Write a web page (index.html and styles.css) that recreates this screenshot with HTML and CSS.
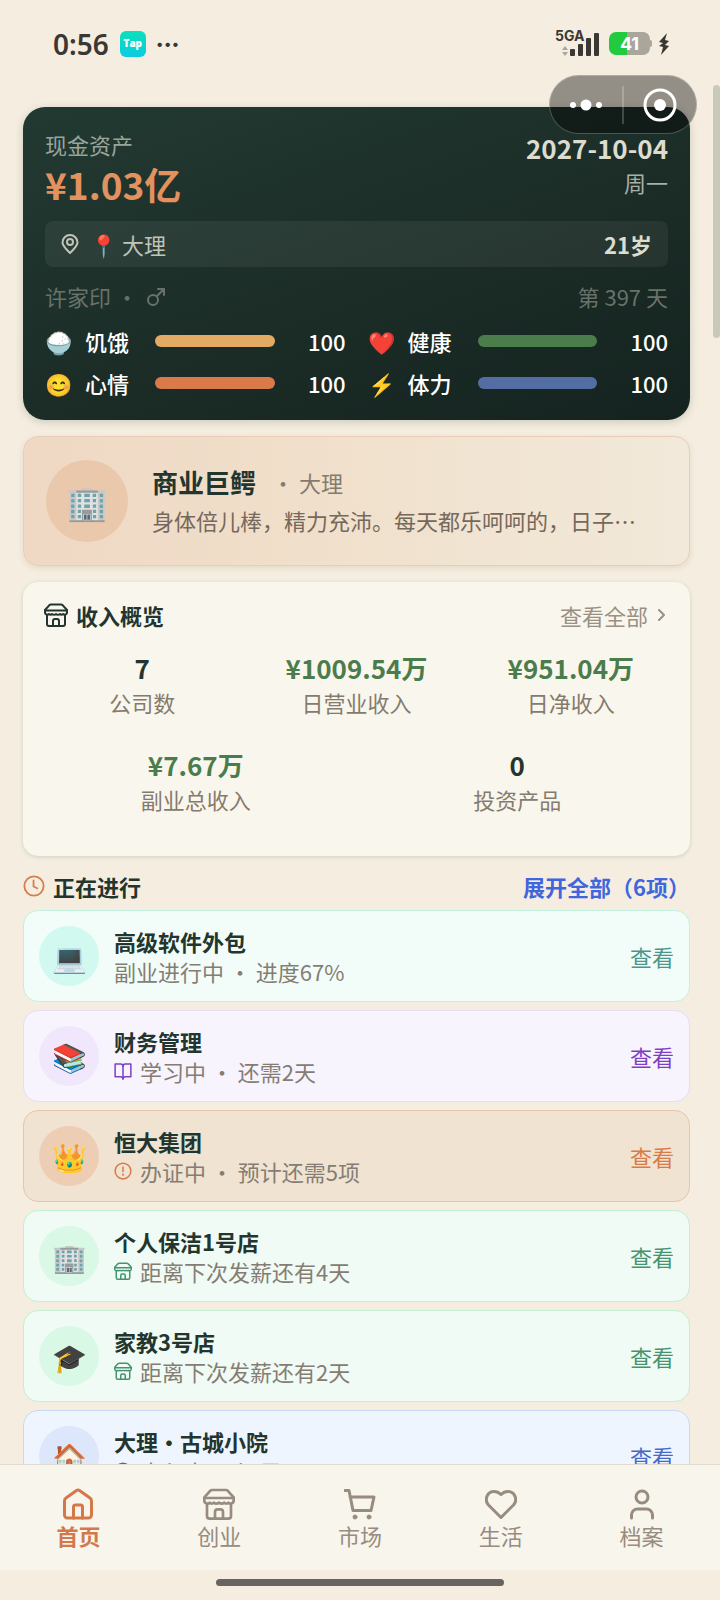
FILE: index.html
```html
<!DOCTYPE html>
<html lang="zh-CN">
<head>
  <meta charset="UTF-8" />
  <meta name="viewport" content="width=device-width, initial-scale=1" />
  <title>首页</title>
  <link rel="stylesheet" href="styles.css">
</head>
<body>

  <!-- shared icons -->
  <svg class="sprite" aria-hidden="true">
    <symbol id="i-store" viewBox="0 0 24 24">
      <path d="M7 1.500h10q1 0 1.800.8L23 7v2.500a2 2 0 0 1-1.500 2q-1.500.7-2.500-.5-1.500 1.500-3 0-2 1.500-4 0-2 1.500-4 0-1.500 1.500-3 0-1 1.200-2.500.5A2 2 0 0 1 1 9.500V7l4.200-4.700Q6 1.500 7 1.500z" />
      <path d="M1 7.500h22" />
      <path d="M3 12v9a2 2 0 0 0 2 2h14a2 2 0 0 0 2-2v-9" />
      <path d="M9 23v-5a2 2 0 0 1 2-2h2a2 2 0 0 1 2 2v5" />
    </symbol>
    <symbol id="i-clock" viewBox="0 0 24 24">
      <circle cx="12" cy="12" r="10.500" />
      <path d="M11.500 6v6.500l4 2" />
    </symbol>
    <symbol id="i-book" viewBox="0 0 24 24">
      <path d="M12 5.500C12 3.500 10.500 2.500 9 2.500H1.500v17H9c2 0 3 1 3 3 0-2 1-3 3-3h7.500v-17H15c-1.500 0-3 1-3 3z" />
      <path d="M12 5.500v17" />
    </symbol>
    <symbol id="i-alert" viewBox="0 0 24 24">
      <circle cx="12" cy="12" r="10.500" />
      <path d="M12 6.500v6M12 16v1.500" />
    </symbol>
  </svg>

  <header class="status-bar">
    <span class="time">0:56</span>
    <span class="tap-logo">Tap</span>
    <span class="more">•••</span>
    <div class="status-right">
      <div class="signal">
        <span>5GA</span>
        <svg viewBox="0 0 46 26" width="46" height="26">
          <path class="dim" d="M7 19l3 -4 3 4zM7 21l3 4 3-4z" />
          <rect x="15" y="18" width="5" height="7" rx="1" />
          <rect x="23" y="13" width="5" height="12" rx="1" />
          <rect x="31" y="7" width="5" height="18" rx="1" />
          <rect x="39" y="2" width="5" height="23" rx="1" />
        </svg>
      </div>
      <div class="battery"><span>41</span></div>
      <svg class="bolt" viewBox="0 0 12 22" width="12" height="22">
        <path d="M9 0L1 9l4 1-4 3 4 1-2 8 8-9-4-1 4-4-4-1z" />
      </svg>
    </div>
  </header>

  <main class="page">

    <section class="hero">
      <div class="hero-top">
        <div>
          <div class="hero-label">现金资产</div>
          <div class="cash">¥1.03亿</div>
        </div>
        <div class="hero-date">
          <div class="date">2027-10-04</div>
          <div class="weekday">周一</div>
        </div>
      </div>
      <div class="place">
        <svg viewBox="0 0 18 20" width="18" height="20">
          <path d="M9 19C6 16 1.500 12 1.500 8.500a7.500 7.500 0 0 1 15 0C16.500 12 12 16 9 19z" />
          <circle cx="9" cy="8" r="3" />
        </svg>
        <span class="place-name">📍 大理</span>
        <span class="age">21岁</span>
      </div>
      <div class="person">
        <span class="person-name">许家印 ・
          <svg viewBox="0 0 20 20" width="20" height="20">
            <circle cx="7" cy="14" r="5" />
            <path d="M11 10l7-7M12 3h6v6" />
          </svg>
        </span>
        <span>第 397 天</span>
      </div>
      <div class="stats">
        <div class="stat"><span class="emoji">🍚</span><span class="stat-name">饥饿</span><div class="bar hunger"></div><span class="num">100</span></div>
        <div class="stat"><span class="emoji">❤️</span><span class="stat-name">健康</span><div class="bar health"></div><span class="num">100</span></div>
        <div class="stat"><span class="emoji">😊</span><span class="stat-name">心情</span><div class="bar mood"></div><span class="num">100</span></div>
        <div class="stat"><span class="emoji">⚡</span><span class="stat-name">体力</span><div class="bar energy"></div><span class="num">100</span></div>
      </div>
    </section>

    <section class="banner">
      <div class="banner-icon">🏢</div>
      <div class="banner-text">
        <div class="banner-title"><b>商业巨鳄</b><span>・ 大理</span></div>
        <p>身体倍儿棒，精力充沛。每天都乐呵呵的，日子…</p>
      </div>
    </section>

    <section class="income">
      <div class="income-head">
        <h2><svg class="icon" width="24" height="24"><use href="#i-store" /></svg>收入概览</h2>
        <a href="#income">查看全部
          <svg viewBox="0 0 8 12" width="8" height="12"><path d="M1 1l5 5-5 5" /></svg>
        </a>
      </div>
      <div class="cells">
        <div class="cell"><b>7</b><span>公司数</span></div>
        <div class="cell money"><b>¥1009.54万</b><span>日营业收入</span></div>
        <div class="cell money"><b>¥951.04万</b><span>日净收入</span></div>
      </div>
      <div class="cells">
        <div class="cell money"><b>¥7.67万</b><span>副业总收入</span></div>
        <div class="cell"><b>0</b><span>投资产品</span></div>
      </div>
    </section>

    <div class="list-head">
      <h2><svg class="icon" width="22" height="22"><use href="#i-clock" /></svg>正在进行</h2>
      <button type="button">展开全部（6项）</button>
    </div>

    <ul class="tasks">
      <li class="task teal">
        <span class="task-icon">💻</span>
        <div class="task-text">
          <h3>高级软件外包</h3>
          <p>副业进行中 ・ 进度67%</p>
        </div>
        <a href="#t1">查看</a>
      </li>
      <li class="task purple">
        <span class="task-icon">📚</span>
        <div class="task-text">
          <h3>财务管理</h3>
          <p><svg class="icon" width="18" height="18"><use href="#i-book" /></svg>学习中 ・ 还需2天</p>
        </div>
        <a href="#t2">查看</a>
      </li>
      <li class="task orange">
        <span class="task-icon">👑</span>
        <div class="task-text">
          <h3>恒大集团</h3>
          <p><svg class="icon" width="18" height="18"><use href="#i-alert" /></svg>办证中 ・ 预计还需5项</p>
        </div>
        <a href="#t3">查看</a>
      </li>
      <li class="task green">
        <span class="task-icon">🏢</span>
        <div class="task-text">
          <h3>个人保洁1号店</h3>
          <p><svg class="icon" width="18" height="18"><use href="#i-store" /></svg>距离下次发薪还有4天</p>
        </div>
        <a href="#t4">查看</a>
      </li>
      <li class="task green">
        <span class="task-icon">🎓</span>
        <div class="task-text">
          <h3>家教3号店</h3>
          <p><svg class="icon" width="18" height="18"><use href="#i-store" /></svg>距离下次发薪还有2天</p>
        </div>
        <a href="#t5">查看</a>
      </li>
      <li class="task blue">
        <span class="task-icon">🏠</span>
        <div class="task-text">
          <h3>大理・古城小院</h3>
          <p><svg class="icon" width="18" height="18"><use href="#i-clock" /></svg>出租中 ・ 还需2天</p>
        </div>
        <a href="#t6">查看</a>
      </li>
    </ul>
  </main>

  <div class="capsule">
    <button type="button" aria-label="更多">
      <svg viewBox="0 0 32 12" width="32" height="12">
        <circle cx="3" cy="6" r="3" /><circle cx="16" cy="6" r="5.500" /><circle cx="29" cy="6" r="3" />
      </svg>
    </button>
    <button type="button" aria-label="关闭">
      <svg viewBox="0 0 34 34" width="34" height="34">
        <circle class="ring" cx="17" cy="17" r="15" /><circle cx="17" cy="17" r="6" />
      </svg>
    </button>
  </div>

  <div class="scroll-thumb"></div>

  <footer class="bottom">
    <nav>
      <a class="active" href="#home">
        <svg viewBox="0 0 32 32" width="32" height="32">
          <path d="M14.500 2.500q1.500-1 3 0L28 10q1.500 1 1.500 3v14a3 3 0 0 1-3 3h-21a3 3 0 0 1-3-3V13q0-2 1.500-3z" />
          <path d="M11.500 30V19a2 2 0 0 1 2-2h5a2 2 0 0 1 2 2v11" />
        </svg>
        首页
      </a>
      <a href="#startup">
        <svg class="icon" width="32" height="32"><use href="#i-store" /></svg>
        创业
      </a>
      <a href="#market">
        <svg viewBox="0 0 32 32" width="32" height="32">
          <path d="M1 2.500h4l4 20h18M6 9h24l-3 13.500" />
          <circle class="dot" cx="11" cy="29" r="2" /><circle class="dot" cx="25" cy="29" r="2" />
        </svg>
        市场
      </a>
      <a href="#life">
        <svg viewBox="0 0 32 32" width="32" height="32">
          <path d="M16 29.500L3.500 17C-1 12 2 3.500 9 3.500c3 0 5 1 7 3 2-2 4-3 7-3 7 0 10 8.500 5.500 13.500z" />
        </svg>
        生活
      </a>
      <a href="#profile">
        <svg viewBox="0 0 32 32" width="32" height="32">
          <circle cx="16" cy="9" r="6" />
          <path d="M5.500 30v-3a6 6 0 0 1 6-6h9a6 6 0 0 1 6 6v3" />
        </svg>
        档案
      </a>
    </nav>
    <div class="home-indicator"></div>
  </footer>

</body>
</html>
```
FILE: styles.css
```css
* {
  box-sizing: border-box;
}

body {
  margin: 0;
  min-height: 100vh;
  background: #f5eee0;
  color: #22352e;
  font-family: "Noto Sans CJK SC", sans-serif;
  font-size: 22px;
  line-height: 30px;
}

h2, h3, p, ul {
  margin: 0;
  padding: 0;
}

h2, h3 {
  font-size: 22px;
  font-weight: 700;
}

a {
  color: inherit;
  text-decoration: none;
}

button {
  padding: 0;
  border: none;
  background: none;
  font: inherit;
  color: inherit;
  cursor: pointer;
}

svg {
  fill: none;
  stroke: currentColor;
  stroke-width: 2;
  stroke-linecap: round;
  stroke-linejoin: round;
  flex: none;
}

.sprite {
  display: none;
}

/* status bar */
.status-bar {
  display: flex;
  align-items: center;
  height: 87px;
  padding: 0 50px 0 53px;
  color: #3b3833;
}

.time {
  font-family: "Noto Sans", sans-serif;
  font-size: 28px;
  font-weight: 600;
}

.tap-logo {
  width: 26px;
  height: 26px;
  margin-left: 11px;
  border-radius: 6px;
  background: linear-gradient(#0be0bb, #0ccbe0);
  color: #fff;
  font-family: "Open Sans", sans-serif;
  font-size: 10px;
  font-weight: 800;
  line-height: 25px;
  text-align: center;
}

.more {
  margin-left: 10px;
  font-family: Inter, sans-serif;
  font-size: 14px;
}

.status-right {
  display: flex;
  align-items: center;
  gap: 8px;
  margin-left: auto;
}

.signal {
  position: relative;
  width: 46px;
  height: 26px;
}

.signal span {
  position: absolute;
  top: -2px;
  left: 0;
  font-family: Inter, sans-serif;
  font-size: 14px;
  font-weight: 700;
  line-height: 14px;
}

.signal svg,
.bolt {
  display: block;
  fill: currentColor;
  stroke: none;
}

.signal .dim {
  fill: #a9a59b;
}

.battery {
  position: relative;
  width: 41px;
  height: 23px;
  border-radius: 7px;
  background: linear-gradient(90deg, #22cb3d 44%, #aaa69c 44%);
  color: #fff;
  font-family: Inter, sans-serif;
  font-size: 18px;
  font-weight: 700;
  line-height: 23px;
  text-align: center;
}

.battery::after {
  content: "";
  position: absolute;
  right: -2px;
  top: 8px;
  width: 2px;
  height: 7px;
  border-radius: 0 2px 2px 0;
  background: #aaa69c;
}

.page {
  padding: 20px 30px 90px 23px;
}

/* hero card */
.hero {
  padding: 21px 22px 22px;
  border-radius: 22px;
  background: linear-gradient(160deg, #223a32 0%, #1b2b26 60%, #14231f 100%);
  box-shadow: 0 2px 8px rgba(26, 60, 50, 0.2);
  color: #fff;
}

.hero-top {
  display: flex;
  justify-content: space-between;
}

.hero-label {
  line-height: 32px;
  color: #9aa49b;
}

.cash {
  font-size: 37px;
  font-weight: 700;
  line-height: 48px;
  color: #e2915f;
}

.hero-date {
  text-align: right;
}

.date {
  font-size: 26px;
  font-weight: 700;
  line-height: 40px;
  color: #dcdccf;
}

.weekday {
  line-height: 28px;
  color: #a9b0a6;
}

.place {
  display: flex;
  align-items: center;
  height: 46px;
  margin-top: 13px;
  padding: 0 16px;
  border-radius: 8px;
  background: rgba(255, 255, 255, 0.06);
  color: #c0c4b9;
}

.place-name {
  margin-left: 11px;
}

.age {
  margin-left: auto;
  font-weight: 700;
  color: #dcdccf;
}

.person {
  display: flex;
  justify-content: space-between;
  margin-top: 14px;
  color: #67726b;
}

.person-name {
  display: flex;
  align-items: center;
  gap: 8px;
}

.stats {
  display: grid;
  grid-template-columns: 1fr 1fr;
  gap: 12px 22px;
  margin-top: 15px;
}

.stat {
  display: flex;
  align-items: center;
  font-weight: 500;
}

.emoji {
  width: 40px;
}

.stat-name {
  width: 70px;
}

.bar {
  flex: 1;
  height: 12px;
  border-radius: 6px;
}

.hunger { background: #e3aa64; }
.health { background: #4b7c4b; }
.mood { background: #d97a48; }
.energy { background: #526ea3; }

.num {
  width: 71px;
  text-align: right;
}

/* banner */
.banner {
  display: flex;
  align-items: center;
  height: 130px;
  margin-top: 16px;
  padding: 0 22px;
  border: 1px solid #e9cdb6;
  border-radius: 15px;
  background: linear-gradient(90deg, #efd8c4, #f0dfca 40%, #f2e9da);
  box-shadow: 0 2px 6px rgba(120, 90, 50, 0.14);
}

.banner-icon {
  width: 82px;
  height: 82px;
  flex: none;
  border-radius: 50%;
  background: #eac8ab;
  font-size: 34px;
  line-height: 82px;
  text-align: center;
}

.banner-text {
  min-width: 0;
  margin-left: 24px;
}

.banner-title {
  display: flex;
  align-items: center;
  line-height: 38px;
}

.banner-title b {
  font-size: 26px;
}

.banner-title span {
  margin-left: 16px;
  color: #857b6d;
}

.banner p {
  line-height: 38px;
  white-space: nowrap;
  color: #75695c;
}

/* income card */
.income {
  margin-top: 16px;
  padding: 18px 12px 12px;
  border-radius: 15px;
  background: #f9f6ed;
  box-shadow: 0 1px 4px rgba(60, 80, 70, 0.2);
}

.income-head {
  display: flex;
  justify-content: space-between;
  padding: 0 12px 0 9px;
  margin-bottom: 20px;
}

.income-head h2,
.list-head h2 {
  display: flex;
  align-items: center;
  gap: 8px;
}

.income-head a {
  display: flex;
  align-items: center;
  gap: 10px;
  color: #9a9084;
}

.cells {
  display: flex;
}

.cell {
  flex: 1;
  display: flex;
  flex-direction: column;
  align-items: center;
  padding-bottom: 29px;
}

.cell b {
  font-size: 26px;
  line-height: 36px;
}

.cell span {
  line-height: 32px;
  color: #857b6d;
}

.money b {
  color: #4b7c4b;
}

/* task list */
.list-head {
  display: flex;
  justify-content: space-between;
  margin: 15px 0 9px;
}

.list-head h2 svg {
  color: #d3804f;
}

.list-head button {
  font-weight: 700;
  color: #3f66dc;
}

.tasks {
  display: flex;
  flex-direction: column;
  gap: 8px;
  list-style: none;
}

.task {
  display: flex;
  align-items: center;
  height: 92px;
  padding: 0 15px;
  border: 1px solid;
  border-radius: 15px;
}

.task-icon {
  width: 60px;
  height: 60px;
  border-radius: 50%;
  font-size: 28px;
  line-height: 60px;
  text-align: center;
}

.task-text {
  flex: 1;
  margin-left: 15px;
}

.task p {
  display: flex;
  align-items: center;
  gap: 8px;
  color: #857d73;
}

.teal { background: #f2fdf9; border-color: #bff0e0; }
.teal .task-icon { background: #d2f9f0; }
.teal a { color: #4b968c; }

.purple { background: #f8f4fe; border-color: #e6dcf5; }
.purple .task-icon { background: #f0e7fc; }
.purple a, .purple svg { color: #7e3fc4; }

.orange { background: #f0e3d1; border-color: #e6c6ab; }
.orange .task-icon { background: #edceb5; }
.orange a, .orange svg { color: #d97a48; }

.green { background: #effbf4; border-color: #c2eed1; }
.green .task-icon { background: #d9f8e5; }
.green a, .green svg { color: #469370; }

.blue { background: #eff5fe; border-color: #c7d9f3; }
.blue .task-icon { background: #dde7fb; }
.blue a, .blue svg { color: #4668c9; }

/* floating controls */
.capsule {
  position: fixed;
  top: 75px;
  right: 23px;
  display: flex;
  align-items: center;
  width: 148px;
  height: 59px;
  border: 1px solid rgba(255, 255, 255, 0.25);
  border-radius: 30px;
  background: rgba(0, 0, 0, 0.4);
  color: #fff;
}

.capsule button {
  flex: 1;
  display: flex;
  align-items: center;
  justify-content: center;
  height: 38px;
}

.capsule button + button {
  border-left: 2px solid rgba(255, 255, 255, 0.2);
}

.capsule svg {
  fill: currentColor;
  stroke: none;
}

.capsule .ring {
  fill: none;
  stroke: currentColor;
  stroke-width: 3;
}

.scroll-thumb {
  position: fixed;
  top: 85px;
  right: 0;
  width: 7px;
  height: 253px;
  border-radius: 4px;
  background: #c9c9ba;
}

/* bottom bar */
.bottom {
  position: fixed;
  left: 0;
  right: 0;
  bottom: 0;
  background: #f5eee0;
}

nav {
  display: flex;
  height: 106px;
  padding: 23px 8px 0;
  border-top: 1px solid #e2ddd0;
  background: #f8f5ec;
}

nav a {
  flex: 1;
  display: flex;
  flex-direction: column;
  align-items: center;
  color: #978c7f;
}

nav svg {
  stroke-width: 3;
}

nav svg.icon {
  stroke-width: 2;
}

nav .dot {
  fill: currentColor;
  stroke-width: 1;
}

nav .active {
  font-weight: 700;
  color: #d4784a;
}

.home-indicator {
  width: 40%;
  height: 7px;
  margin: 9px auto 14px;
  border-radius: 4px;
  background: #66655f;
}
```
